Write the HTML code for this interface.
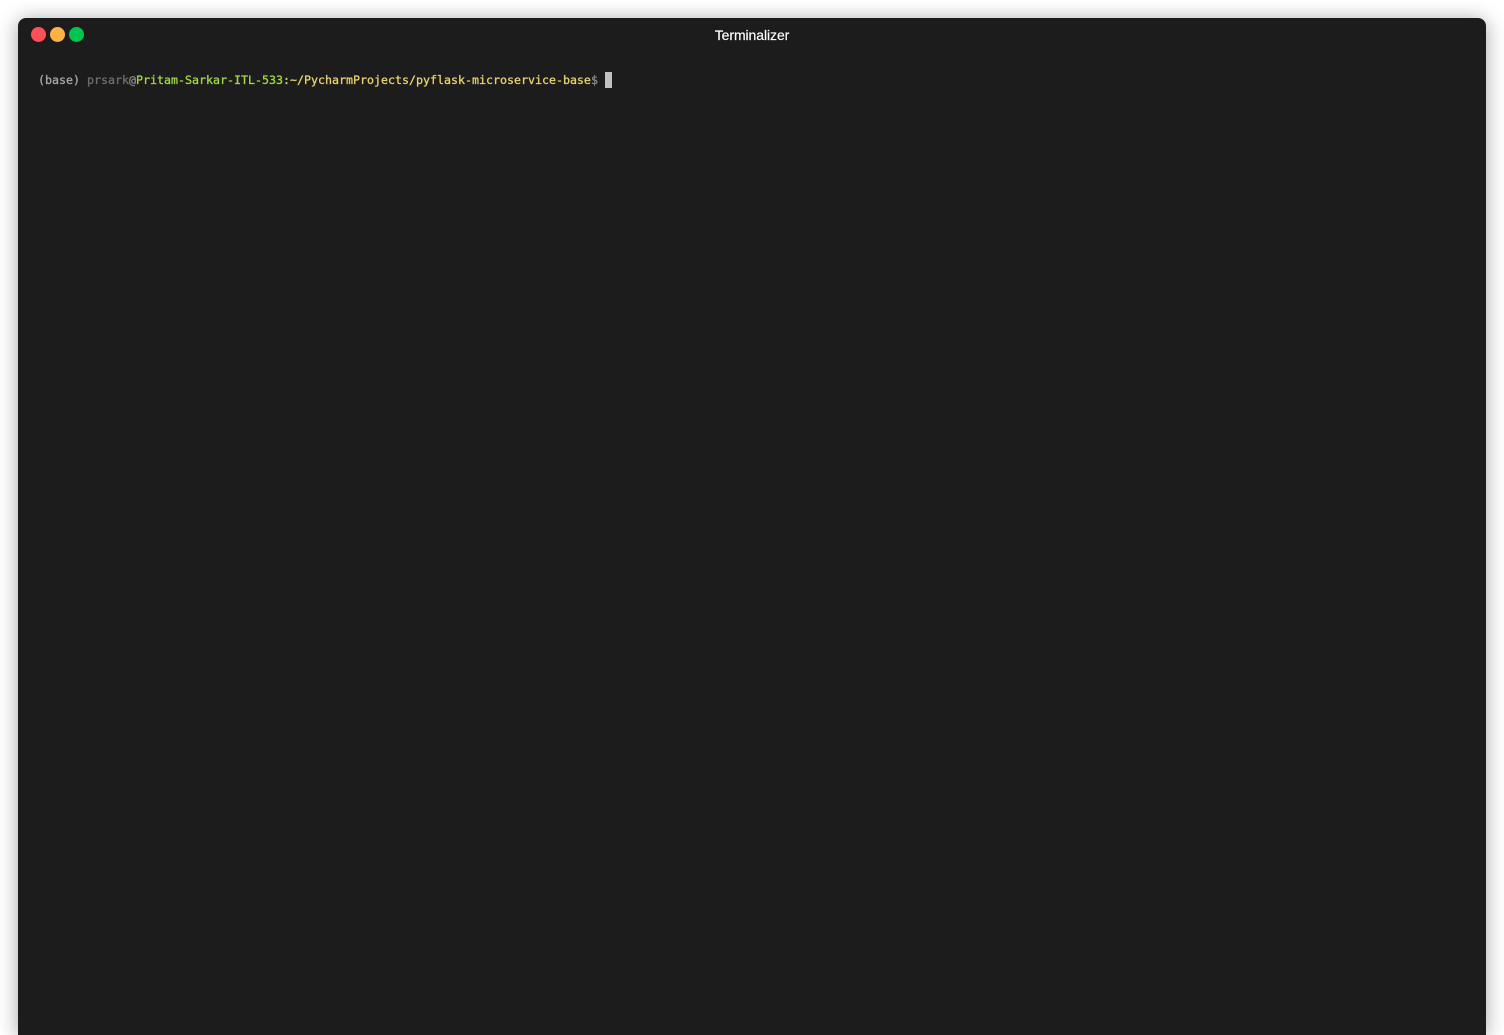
<!DOCTYPE html>
<html>
<head>
<meta charset="utf-8">
<style>
html,body{margin:0;padding:0;width:1504px;height:1035px;background:#fff;overflow:hidden}
#page{position:relative;width:1504px;height:1035px;overflow:hidden;background:#fff}
#win{position:absolute;left:18px;top:18px;width:1468px;height:1017px;background:#1c1c1c;border-radius:8px 8px 0 0;box-shadow:0 2px 20px rgba(0,0,0,.36)}
.dot{position:absolute;top:27px;width:15px;height:15px;border-radius:50%}
#title{position:absolute;left:652px;top:26px;width:200px;text-align:center;color:#fff;font:14px/18px "Liberation Sans",sans-serif;letter-spacing:-.08px;-webkit-text-stroke:.15px #fff}
#line{position:absolute;left:38px;top:71px;font:11.63px/18px "DejaVu Sans Mono",monospace;white-space:pre;color:#c4c4c4;-webkit-text-stroke:.3px}
#cur{position:absolute;left:605px;top:72px;width:7px;height:16px;background:#c0c0c0}
</style>
</head>
<body>
<div id="page">
<div id="win"></div>
<div class="dot" style="left:31px;background:#ff4f57"></div>
<div class="dot" style="left:50px;background:#ffb142"></div>
<div class="dot" style="left:69px;background:#00c64f"></div>
<div id="title">Terminalizer</div>
<div id="line"><span style="color:#a8a8a8">(base) </span><span style="color:#6b6f70">prsark</span><span style="color:#8a8a8a">@</span><span style="color:#a3d93a">Pritam-Sarkar-ITL-533</span><span style="color:#c8d860">:</span><span style="color:#e9d468">~/PycharmProjects/pyflask-microservice-base</span><span style="color:#8a8a8a">$</span></div>
<div id="cur"></div>
</div>
</body>
</html>
